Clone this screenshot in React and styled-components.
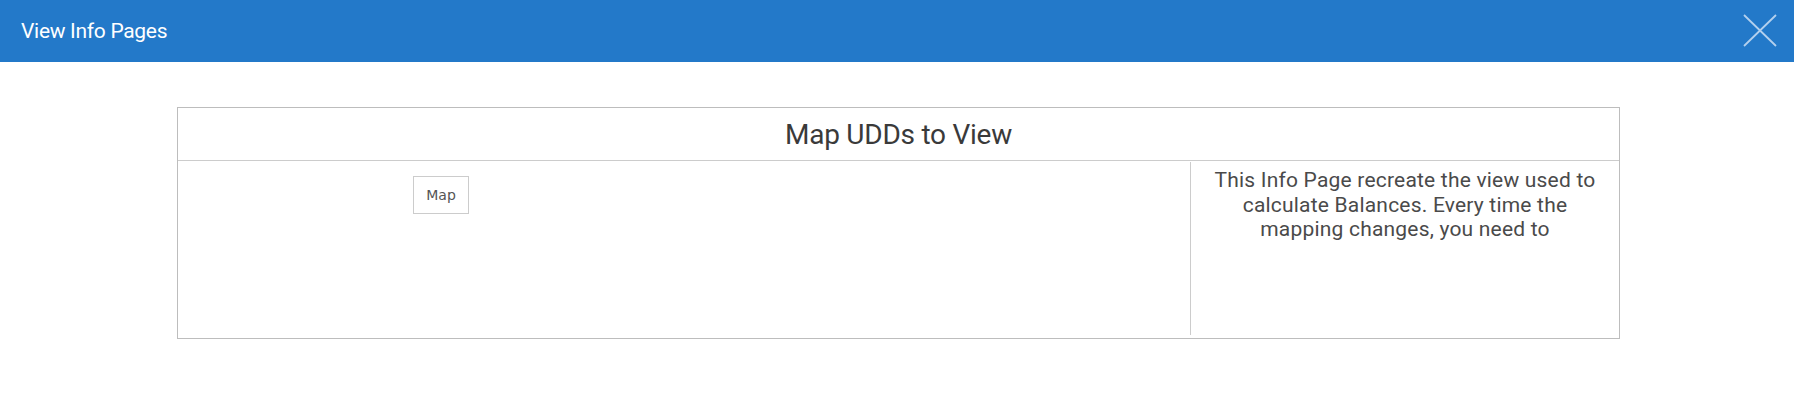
import styled, { createGlobalStyle } from "styled-components";

const GlobalStyle = createGlobalStyle`
  body {
    margin: 0;
    background: #ffffff;
    font-family: Roboto, "Liberation Sans", sans-serif;
  }
`;

function CloseIcon() {
  return (
    <svg width="34" height="33" viewBox="0 0 34 33">
      <path d="M1 1 L33 32 M33 1 L1 32" stroke="#b3d0ee" strokeWidth="1.8" fill="none" />
    </svg>
  );
}

function App() {
  return (
    <>
      <GlobalStyle />
      <TopBar>
        <Title>View Info Pages</Title>
        <CloseButton>
          <CloseIcon />
        </CloseButton>
      </TopBar>
      <Content>
        <Panel>
          <PanelHeader>Map UDDs to View</PanelHeader>
          <PanelBody>
            <ActionCell>
              <MapButton>Map</MapButton>
            </ActionCell>
            <InfoCell>
              This Info Page recreate the view used to calculate Balances. Every time the mapping
              changes, you need to
            </InfoCell>
          </PanelBody>
        </Panel>
      </Content>
    </>
  );
}

export default App;

const TopBar = styled.div`
  height: 62px;
  background: #2379c9;
  display: flex;
  align-items: center;
  justify-content: space-between;
  padding: 0 17px 0 21px;
`;

const Title = styled.div`
  color: #ffffff;
  font-size: 21px;
  letter-spacing: -0.3px;
`;

const CloseButton = styled.div`
  display: flex;
  align-items: center;
  margin-top: -2px;
`;

const Content = styled.div`
  padding: 45px 174px 0 177px;
`;

const Panel = styled.div`
  border: 1px solid #bdbdbd;
`;

const PanelHeader = styled.div`
  height: 52px;
  border-bottom: 1px solid #cccccc;
  display: flex;
  align-items: center;
  justify-content: center;
  font-size: 28px;
  color: #3a3a3a;
  letter-spacing: -0.25px;
`;

const PanelBody = styled.div`
  display: grid;
  grid-template-columns: 1fr 429px;
  height: 177px;
`;

const ActionCell = styled.div`
  padding: 15px 0 0 235px;
`;

const MapButton = styled.button`
  width: 56px;
  height: 38px;
  border: 1px solid #cccccc;
  background: #ffffff;
  font-family: "DejaVu Sans", Verdana, sans-serif;
  font-size: 14px;
  color: #555555;
  padding: 0;
`;

const InfoCell = styled.div`
  border-left: 1px solid #cccccc;
  margin: 1px 0 3px;
  padding: 6px 18px 0 18px;
  text-align: center;
  font-size: 21px;
  line-height: 24.5px;
  letter-spacing: 0.2px;
  color: #4a4a4a;
`;
